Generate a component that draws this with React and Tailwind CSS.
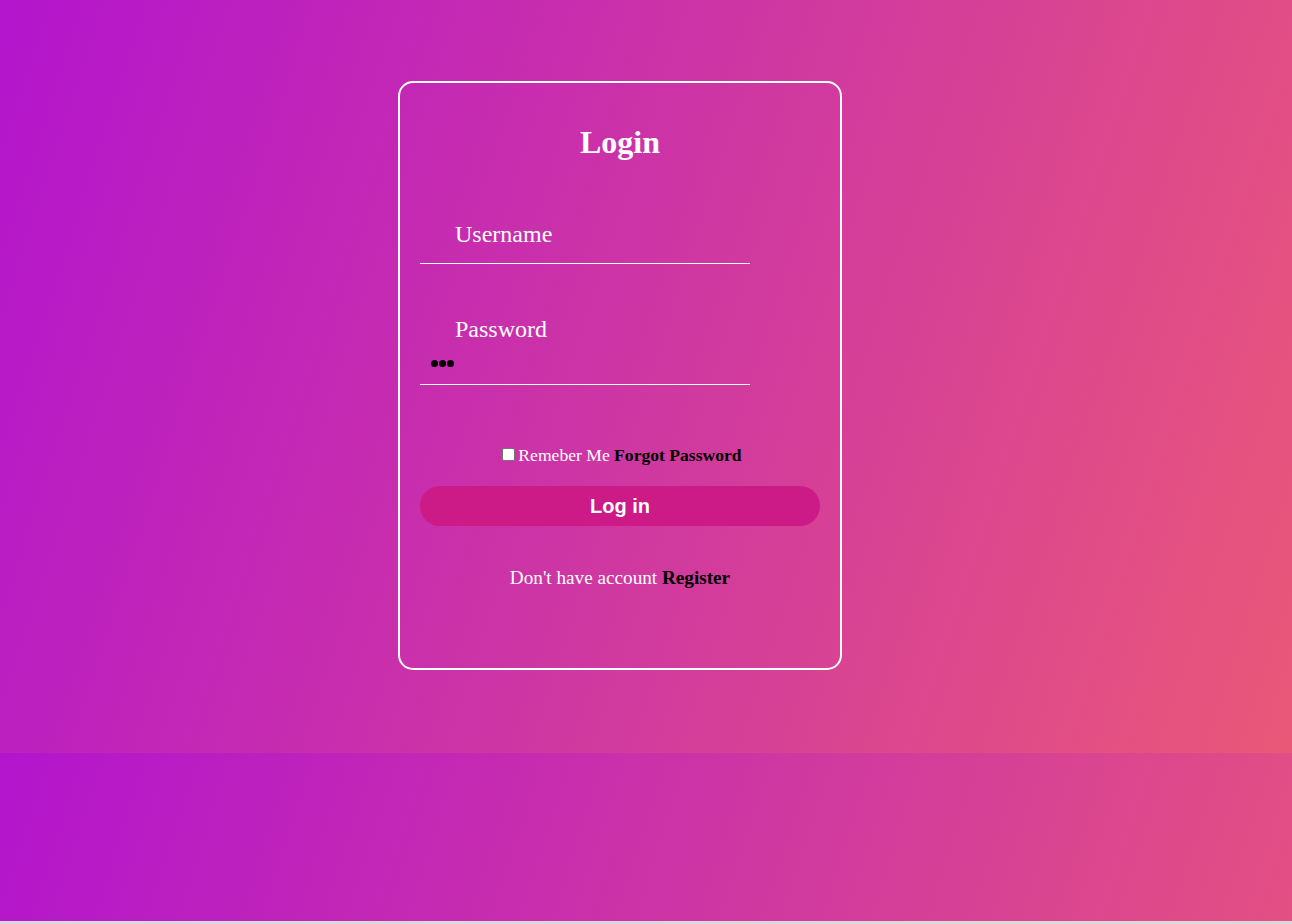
export default function App() {
  return (
    <div className="w-full font-['Liberation_Serif',serif]">
      <div className="h-[753px] bg-[linear-gradient(108deg,#b315cd,#ea5878)] pt-[81px] pl-[398px]">
        <div className="w-[444px] h-[589px] border-2 border-white rounded-[15px] px-[20px] pt-[41px] flex flex-col">
          <h1 className="text-[32px] leading-[36px] font-bold text-center text-white">Login</h1>

          <div className="mt-[60px] w-[330px] border-b border-white">
            <label className="block text-[24px] leading-[28px] pl-[35px] text-white">Username</label>
            <div className="h-[15px]" />
          </div>

          <div className="mt-[51px] w-[330px] border-b border-white">
            <label className="block text-[24px] leading-[28px] pl-[35px] text-white">Password</label>
            <div className="h-[41px] flex items-center pl-[11px] gap-[1px]">
              <span className="w-[7px] h-[7px] rounded-full bg-black" />
              <span className="w-[7px] h-[7px] rounded-full bg-black" />
              <span className="w-[7px] h-[7px] rounded-full bg-black" />
            </div>
          </div>

          <p className="mt-[60px] text-[17.6px] leading-[20px] text-center text-white">
            <span className="inline-block w-[13px] h-[13px] ml-[4px] mr-[3px] bg-white border border-[#767676] rounded-[2px]" />
            Remeber Me <a className="font-bold text-black">Forgot Password</a>
          </p>

          <button className="mt-[21px] h-[40px] w-[400px] rounded-full bg-[#cc1a86] text-white font-bold text-[20px] font-['Liberation_Sans',Arial,sans-serif]">
            Log in
          </button>

          <p className="mt-[41px] text-[19.2px] leading-[22px] text-center text-white">
            Don't have account <a className="font-bold text-black">Register</a>
          </p>
        </div>
      </div>
      <div className="h-[168px] bg-[linear-gradient(108deg,#b315cd,#ea5878)] bg-[length:100%_753px] bg-no-repeat" />
      <div className="h-[3px] bg-[#d9d9d9]" />
    </div>
  );
}
